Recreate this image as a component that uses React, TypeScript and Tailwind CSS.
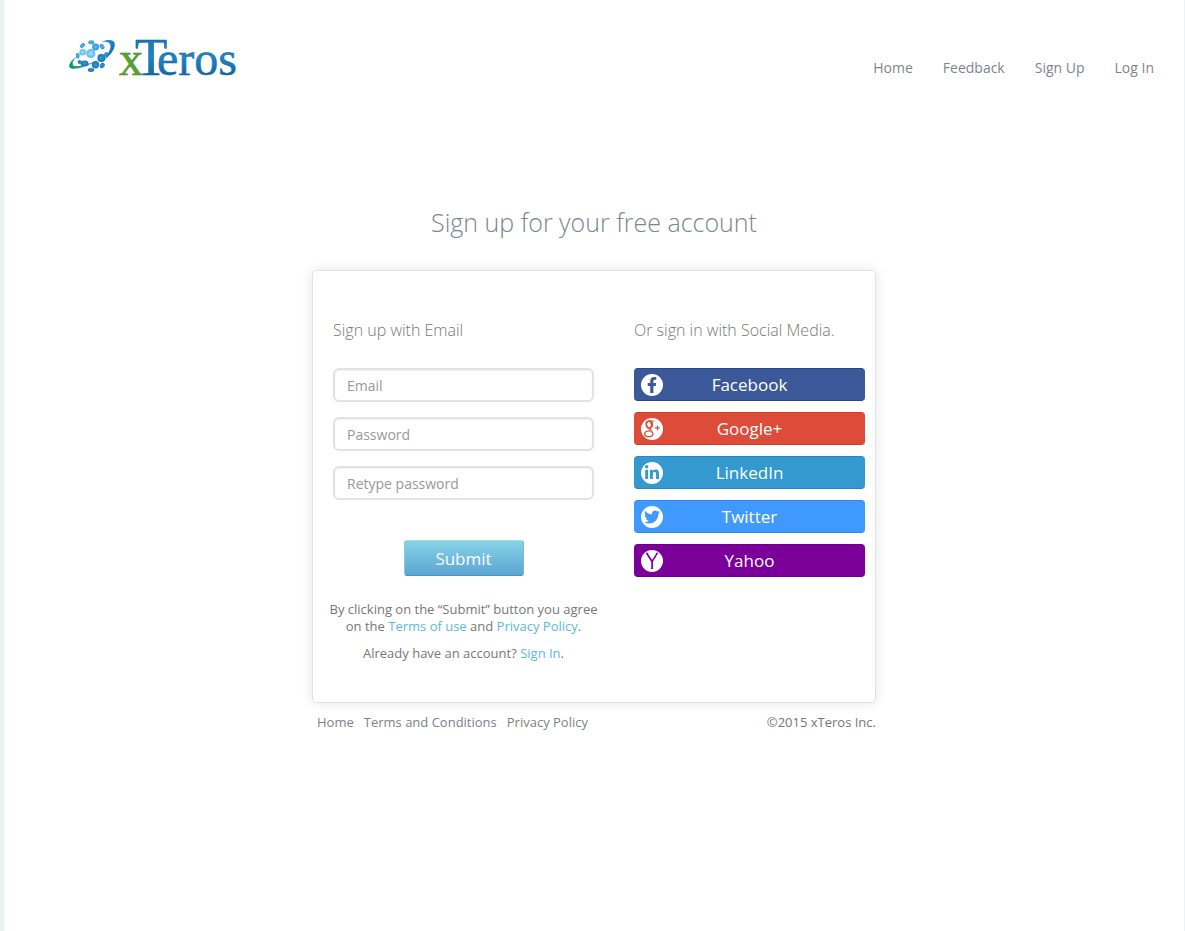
import { useState } from "react";
import type { ReactNode } from "react";
import { FaFacebookF, FaLinkedinIn, FaTwitter } from "react-icons/fa";

interface Provider {
  name: string;
  color: string;
  icon: ReactNode;
}

const NAV_LINKS = ["Home", "Feedback", "Sign Up", "Log In"];
const FOOTER_LINKS = ["Home", "Terms and Conditions", "Privacy Policy"];

const FIELDS = [
  { id: "email", label: "Email", type: "email" },
  { id: "password", label: "Password", type: "password" },
  { id: "retype", label: "Retype password", type: "password" },
];

const PROVIDERS: Provider[] = [
  {
    name: "Facebook",
    color: "bg-[#3b5998] border-[#2a468a] text-[#3b5998]",
    icon: <FaFacebookF className="w-4 h-4" />,
  },
  {
    name: "Google+",
    color: "bg-[#dd4b39] border-[#d33a27] text-[#dd4b39]",
    icon: <GooglePlusIcon />,
  },
  {
    name: "LinkedIn",
    color: "bg-[#3399cf] border-[#2389c2] text-[#3399cf]",
    icon: <FaLinkedinIn className="w-4 h-4" />,
  },
  {
    name: "Twitter",
    color: "bg-[#4099ff] border-[#2d88f5] text-[#4099ff]",
    icon: <FaTwitter className="w-4 h-4" />,
  },
  {
    name: "Yahoo",
    color: "bg-[#7b0099] border-[#6c008a] text-[#7b0099]",
    icon: <YahooIcon />,
  },
];

// Old style "g" with a small plus
function GooglePlusIcon() {
  return (
    <svg viewBox="0 0 22 22" className="w-[22px] h-[22px]" fill="none" stroke="currentColor">
      <ellipse cx="8" cy="6.6" rx="2.7" ry="3.4" strokeWidth="1.7" transform="rotate(-14 8 6.6)" />
      <path d="M8 3h5.4M10.2 3.3c2 1.8 1.8 4.500.2 5.700-1.3 1-1.2 1.700 0 2.700" strokeWidth="1.1" />
      <path
        d="M8.2 10.4c-.5 1 .3 1.500 1.300 2.200 1.800 1.200 2.700 2.100 2.400 3.500-.3 1.900-2.100 2.600-4.100 2.600-2.400 0-4.100-1-4.100-2.800 0-2.100 2.300-3 5.300-3"
        strokeWidth="1.3"
      />
      <path d="M16.4 7.500v4.800M14 9.900h4.800" strokeWidth="1.1" />
    </svg>
  );
}

function YahooIcon() {
  return (
    <svg viewBox="0 0 22 22" className="w-[22px] h-[22px]" fill="none" stroke="currentColor">
      <path d="M5.700 3.200l5.400 8.300v7" strokeWidth="1.700" />
      <path d="M16.300 3.200l-5.200 8.300" strokeWidth="1.500" />
      <path d="M4.900 3.200h2.200M15 3.200h2.200M9.900 18.500h2.400" strokeWidth=".9" />
    </svg>
  );
}

function Logo() {
  return (
    <svg viewBox="0 0 170 42" className="w-[170px] h-[42px] overflow-visible" role="img" aria-label="xTeros">
      <defs>
        <linearGradient id="ring-left" x1="0" y1="0" x2="1" y2="0">
          <stop offset="0" stopColor="#0a9a6c" />
          <stop offset="0.5" stopColor="#12a585" />
          <stop offset="1" stopColor="#2196c8" />
        </linearGradient>
        <linearGradient id="ring-right" x1="0" y1="0" x2="1" y2="1">
          <stop offset="0" stopColor="#2b9ad6" />
          <stop offset="1" stopColor="#0663b0" />
        </linearGradient>
        <linearGradient id="blue" x1="0" y1="0" x2="0" y2="1">
          <stop offset="0" stopColor="#1f6ba6" />
          <stop offset="0.5" stopColor="#1a86cb" />
          <stop offset="1" stopColor="#0f5690" />
        </linearGradient>
        <radialGradient id="dot">
          <stop offset="0" stopColor="#62bfea" />
          <stop offset="1" stopColor="#2a92d1" />
        </radialGradient>
        <radialGradient id="dot-light">
          <stop offset="0" stopColor="#a5e2f9" />
          <stop offset="1" stopColor="#56b9e8" />
        </radialGradient>
        <radialGradient id="dot-dark">
          <stop offset="0" stopColor="#3b9bd6" />
          <stop offset="1" stopColor="#1672b8" />
        </radialGradient>
      </defs>

      {/* Orbit */}
      <path
        d="M8 19C3 22.500.5 26.500 1.300 29 3 32.500 15 31 30 22 18 27.500 7.500 29.500 5.200 27.300 3.800 25.200 5.500 22 8 19z"
        fill="url(#ring-left)"
      />
      <path
        d="M33.500 4C40 1 46.500 1.500 46.800 6c.2 5-4.300 11.500-10.300 15.500C40 16.500 43.300 10.500 42.300 6.800 41.300 3.800 38 3.400 33.500 4z"
        fill="url(#ring-right)"
      />

      {/* Globe of dots */}
      <g fill="url(#dot)">
        <ellipse cx="14.500" cy="7.500" rx="2.900" ry="2" transform="rotate(-40 14.500 7.500)" />
        <ellipse cx="23.300" cy="4.200" rx="2.900" ry="2" />
        <ellipse cx="34" cy="8.600" rx="2.100" ry="2.900" transform="rotate(-35 34 8.600)" />
        <circle cx="27.600" cy="9" r="3.400" />
        <circle cx="14.700" cy="14.200" r="3.300" fill="url(#dot-light)" />
        <circle cx="22.800" cy="15.500" r="4.600" fill="url(#dot-light)" />
        <ellipse cx="9.700" cy="17.700" rx="1.900" ry="2.800" />
        <circle cx="33.400" cy="20" r="4" fill="url(#dot-dark)" />
        <circle cx="38.500" cy="16.500" r="2.300" fill="url(#dot-dark)" />
        <ellipse cx="16.500" cy="25.400" rx="4" ry="2.900" fill="url(#dot-dark)" />
        <circle cx="27.500" cy="26.800" r="3.700" fill="url(#dot-dark)" />
        <ellipse cx="34.300" cy="27.600" rx="2.200" ry="2.800" transform="rotate(35 34.300 27.600)" fill="url(#dot-dark)" />
        <ellipse cx="23" cy="32" rx="3.200" ry="1.900" fill="url(#dot-dark)" />
        <circle cx="11.500" cy="24" r="2" fill="#1d8fb0" />
      </g>

      <text y="37" fontSize="48" className="font-['Liberation_Serif',serif]" fill="url(#blue)">
        <tspan x="51" fill="#55a630" stroke="#3f8a22" strokeWidth=".5">x</tspan>
        <tspan x="67" fontSize="53" stroke="#17609c" strokeWidth=".5">T</tspan>
        <tspan x="89" stroke="#17609c" strokeWidth=".5">eros</tspan>
      </text>
    </svg>
  );
}

function SocialButton({ name, color, icon }: Provider) {
  return (
    <button
      type="button"
      className={`relative flex h-[33px] w-full items-center justify-center rounded border-y ${color}`}
    >
      <span className="absolute left-[7px] flex h-[22px] w-[22px] items-center justify-center rounded-full bg-white">
        {icon}
      </span>
      <span className="text-[17px] leading-6 text-white">{name}</span>
    </button>
  );
}

export default function App() {
  const [values, setValues] = useState<Record<string, string>>({});

  return (
    <div className="min-h-screen border-l-4 border-r border-[#e8f4f1] bg-white font-['Open_Sans',sans-serif] text-[#777777]">
      <header className="flex items-start justify-between pt-[38px] pr-[30px] pl-16">
        <a href="#" aria-label="xTeros">
          <Logo />
        </a>
        <nav className="flex gap-[30px] pt-5 text-sm text-[#7d858f]">
          {NAV_LINKS.map((link) => (
            <a key={link} href="#">{link}</a>
          ))}
        </nav>
      </header>

      <main className="mx-auto mt-[122px] max-w-[564px]">
        <h1 className="text-center text-[25px] leading-10 font-light text-[#7d858f]">
          Sign up for your free account
        </h1>

        <div className="mt-7 flex gap-10 rounded border border-[#e2e2e2] pt-[47px] pr-2.5 pb-10 pl-5 shadow-[0_0_12px_rgba(0,0,0,0.1)]">
          {/* Email sign up */}
          <form className="w-[261px]" onSubmit={(e) => e.preventDefault()}>
            <h2 className="text-base leading-6 font-light">Sign up with Email</h2>
            <div className="mt-[26px] flex flex-col gap-[15px]">
              {FIELDS.map((field) => (
                <input
                  key={field.id}
                  id={field.id}
                  type={field.type}
                  aria-label={field.label}
                  placeholder={field.label}
                  value={values[field.id] ?? ""}
                  onChange={(e) => setValues({ ...values, [field.id]: e.target.value })}
                  className="h-[34px] w-full rounded-md border-2 border-[#e2e2e2] px-3 text-sm placeholder:text-[#999999] shadow-[inset_0_1px_2px_rgba(0,0,0,0.06)]"
                />
              ))}
            </div>
            <button
              type="submit"
              className="mx-auto mt-10 block h-9 w-[120px] rounded-[3px] border border-t-[#9edcea] border-r-[#70bcdc] border-b-[#4690c5] border-l-[#86cde3] bg-linear-to-b from-[#86d3e7] to-[#5da5d3] pt-0.5 text-[17px] font-medium text-white"
            >
              Submit
            </button>
            <p className="-mx-2 mt-[25px] text-center text-[13px] leading-[17px]">
              By clicking on the “Submit” button you agree on the{" "}
              <a href="#" className="text-[#5bb8e0]">Terms of use</a> and{" "}
              <a href="#" className="text-[#5bb8e0]">Privacy Policy</a>.
            </p>
            <p className="mt-2.5 text-center text-[13px] leading-[17px]">
              Already have an account? <a href="#" className="text-[#5bb8e0]">Sign In</a>.
            </p>
          </form>

          {/* Social sign in */}
          <section className="flex-1">
            <h2 className="text-base leading-6 font-light">Or sign in with Social Media.</h2>
            <div className="mt-[26px] flex flex-col gap-[11px]">
              {PROVIDERS.map((provider) => (
                <SocialButton key={provider.name} {...provider} />
              ))}
            </div>
          </section>
        </div>

        <footer className="mt-2.5 flex justify-between pl-[5px] text-[13px] leading-[18px]">
          <nav className="flex gap-2.5 text-[#7d8187]">
            {FOOTER_LINKS.map((link) => (
              <a key={link} href="#">{link}</a>
            ))}
          </nav>
          <span>©2015 xTeros Inc.</span>
        </footer>
      </main>
    </div>
  );
}
